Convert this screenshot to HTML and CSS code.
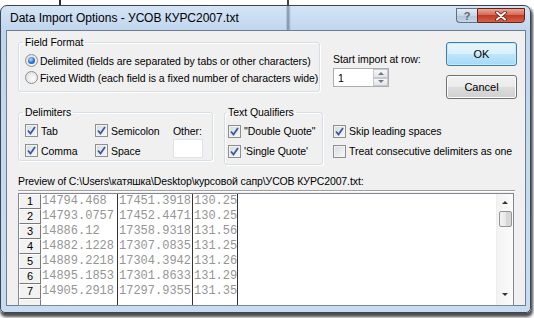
FILE: index.html
```html
<!DOCTYPE html>
<html>
<head>
  <title>Data Import Options</title>
  <link rel="stylesheet" href="styles.css">
</head>
<body>
  <div class="window">
    <div class="titlebar">
      <span class="title">Data Import Options - УСОВ КУРС2007.txt</span>
      <div class="caption-btns">
        <span class="cap help">?</span>
        <span class="cap close">
          <svg width="14" height="10" viewBox="0 0 14 10"><path d="M3 1.5 L11 8.5 M11 1.5 L3 8.5" stroke="#5a1a10" stroke-width="3.6" stroke-linecap="round"/><path d="M3 1.5 L11 8.5 M11 1.5 L3 8.5" stroke="#fff" stroke-width="2" stroke-linecap="round"/></svg>
        </span>
      </div>
    </div>

    <div class="client">
      <div class="row top-row">
        <fieldset class="group format">
          <legend>Field Format</legend>
          <div class="opt"><span class="radio on"></span>Delimited (fields are separated by tabs or other characters)</div>
          <div class="opt"><span class="radio"></span>Fixed Width (each field is a fixed number of characters wide)</div>
        </fieldset>

        <div class="start">
          <div class="start-label">Start import at row:</div>
          <div class="spin">
            <span class="spin-val">1</span>
            <span class="spin-arrows">
              <span class="arr up"></span>
              <span class="arr down"></span>
            </span>
          </div>
        </div>

        <div class="buttons">
          <button class="btn default">OK</button>
          <button class="btn">Cancel</button>
        </div>
      </div>

      <div class="row mid-row">
        <fieldset class="group delims">
          <legend>Delimiters</legend>
          <div class="delim-grid">
            <div class="opt"><span class="cb on"><svg width="11" height="11" viewBox="0 0 11 11"><path d="M2 5.5 L4.5 8.5 L9 2" fill="none" stroke="#3b5a9e" stroke-width="1.8"/></svg></span>Tab</div>
            <div class="opt"><span class="cb on"><svg width="11" height="11" viewBox="0 0 11 11"><path d="M2 5.5 L4.5 8.5 L9 2" fill="none" stroke="#3b5a9e" stroke-width="1.8"/></svg></span>Semicolon</div>
            <div class="other-label">Other:</div>
            <div class="opt"><span class="cb on"><svg width="11" height="11" viewBox="0 0 11 11"><path d="M2 5.5 L4.5 8.5 L9 2" fill="none" stroke="#3b5a9e" stroke-width="1.8"/></svg></span>Comma</div>
            <div class="opt"><span class="cb on"><svg width="11" height="11" viewBox="0 0 11 11"><path d="M2 5.5 L4.5 8.5 L9 2" fill="none" stroke="#3b5a9e" stroke-width="1.8"/></svg></span>Space</div>
            <div class="other-box"></div>
          </div>
        </fieldset>

        <fieldset class="group quals">
          <legend>Text Qualifiers</legend>
          <div class="opt"><span class="cb on"><svg width="11" height="11" viewBox="0 0 11 11"><path d="M2 5.5 L4.5 8.5 L9 2" fill="none" stroke="#3b5a9e" stroke-width="1.8"/></svg></span>"Double Quote"</div>
          <div class="opt"><span class="cb on"><svg width="11" height="11" viewBox="0 0 11 11"><path d="M2 5.5 L4.5 8.5 L9 2" fill="none" stroke="#3b5a9e" stroke-width="1.8"/></svg></span>'Single Quote'</div>
        </fieldset>

        <div class="checks">
          <div class="opt"><span class="cb on"><svg width="11" height="11" viewBox="0 0 11 11"><path d="M2 5.5 L4.5 8.5 L9 2" fill="none" stroke="#3b5a9e" stroke-width="1.8"/></svg></span>Skip leading spaces</div>
          <div class="opt"><span class="cb"></span>Treat consecutive delimiters as one</div>
        </div>
      </div>

      <div class="preview-label">Preview of C:\Users\катяшка\Desktop\курсовой сапр\УСОВ КУРС2007.txt:</div>

      <div class="preview">
        <div class="grid">
          <div class="prow"><span class="rh">1</span><span class="c c1">14794.468</span><span class="c c2">17451.3918</span><span class="c c3">130.25</span></div>
          <div class="prow"><span class="rh">2</span><span class="c c1">14793.0757</span><span class="c c2">17452.4471</span><span class="c c3">130.25</span></div>
          <div class="prow"><span class="rh">3</span><span class="c c1">14886.12</span><span class="c c2">17358.9318</span><span class="c c3">131.56</span></div>
          <div class="prow"><span class="rh">4</span><span class="c c1">14882.1228</span><span class="c c2">17307.0835</span><span class="c c3">131.25</span></div>
          <div class="prow"><span class="rh">5</span><span class="c c1">14889.2218</span><span class="c c2">17304.3942</span><span class="c c3">131.26</span></div>
          <div class="prow"><span class="rh">6</span><span class="c c1">14895.1853</span><span class="c c2">17301.8633</span><span class="c c3">131.29</span></div>
          <div class="prow"><span class="rh">7</span><span class="c c1">14905.2918</span><span class="c c2">17297.9355</span><span class="c c3">131.35</span></div>
          <div class="prow"><span class="rh"></span><span class="c c1"></span><span class="c c2"></span><span class="c c3"></span></div>
        </div>
        <div class="scrollbar">
          <span class="sarrow sup"></span>
          <span class="thumb"></span>
          <span class="sarrow sdown"></span>
        </div>
      </div>
    </div>
  </div>
</body>
</html>
```

FILE: styles.css
```css
body {
  margin: 0;
  width: 534px;
  height: 318px;
  overflow: hidden;
  font-family: "Liberation Sans", Arial, sans-serif;
  font-size: 10.5px;
  letter-spacing: -0.05px;
  color: #000;
  background-color: #fff;
  background-image: linear-gradient(to right, #fff 59px, #2a2a2a 59px, #2a2a2a 61px, #fff 61px, #fff 287px, #444 287px, #444 289px, #fff 289px);
  background-size: 100% 6px;
  background-repeat: no-repeat;
}
.window {
  margin-top: 5px;
  width: 531px;
  height: 308px;
  box-sizing: border-box;
  border: 1px solid #3d4654;
  border-radius: 7px 7px 5px 5px;
  background: linear-gradient(to bottom, #d4e4f5, #bfd5ee 26px, #c4d9f0 120px, #c8dcf1);
  box-shadow: 1px 3px 3px 1px rgba(0, 0, 0, 0.7);
  display: flex;
  flex-direction: column;
}
.titlebar {
  height: 24px;
  display: flex;
  align-items: flex-start;
  padding: 0 5px 0 9px;
  border-radius: 6px 6px 0 0;
  background: linear-gradient(to right, transparent 285px, rgba(70, 85, 105, 0.35) 286px, rgba(50, 60, 80, 0.5) 287px, rgba(70, 85, 105, 0.35) 288px, transparent 290px);
}
.title {
  font-size: 12px;
  line-height: 14px;
  letter-spacing: 0;
  margin-top: 5px;
  color: #000;
}
.caption-btns {
  margin-left: auto;
  margin-top: 2px;
  display: flex;
}
.cap {
  height: 15px;
  box-sizing: border-box;
  display: flex;
  align-items: center;
  justify-content: center;
}
.help {
  width: 21px;
  border: 1px solid #5f7187;
  border-right: none;
  border-radius: 0 0 0 4px;
  background: linear-gradient(to bottom, #e4ecf5, #c9d6e5 50%, #b5c5d8 51%, #c6d6e8);
  color: #5d6670;
  font-size: 11px;
  font-weight: bold;
}
.close {
  width: 48px;
  border: 1px solid #6a2018;
  border-radius: 0 0 4px 0;
  background: linear-gradient(to bottom, #e8a898, #d46a55 45%, #c43a22 50%, #d4624a);
}
.client {
  margin: 0 4px 0 5px;
  height: 276px;
  box-sizing: border-box;
  border: 1px solid #6f7d8c;
  background: #f0f0f0;
  padding: 5px 8px 0 11px;
}
.row {
  display: flex;
  align-items: flex-start;
}
.group {
  margin: 0;
  border: 1px solid #d5dfe5;
  border-radius: 3px;
  box-shadow: inset 1px 1px 0 #fff, 1px 1px 0 #fff;
  min-width: 0;
}
.group legend {
  padding: 0 2px;
  margin-left: -2px;
  line-height: 13px;
}
.opt {
  display: flex;
  align-items: center;
  height: 17px;
  white-space: nowrap;
}
.format {
  width: 302px;
  box-sizing: border-box;
  padding: 3px 0 5px 6px;
}
.radio {
  flex-shrink: 0;
  width: 13px;
  height: 13px;
  box-sizing: border-box;
  border: 1px solid #8e8f8f;
  border-radius: 50%;
  background: radial-gradient(circle at 60% 60%, #fdfdfd, #d8d8d8);
  margin-right: 2px;
  display: flex;
  align-items: center;
  justify-content: center;
}
.radio.on::after {
  content: "";
  width: 7px;
  height: 7px;
  border-radius: 50%;
  background: radial-gradient(circle at 40% 35%, #b6dcff, #2a72c8 55%, #124a96);
}
.cb {
  flex-shrink: 0;
  width: 13px;
  height: 13px;
  box-sizing: border-box;
  border: 1px solid #8e8f8f;
  background: linear-gradient(135deg, #d5d9df, #f8f9fa);
  box-shadow: inset 0 0 0 1px #f2f2f2;
  margin-right: 3px;
  display: flex;
  align-items: center;
  justify-content: center;
}
.start {
  margin-left: 13px;
  margin-top: 17px;
}
.start-label {
  line-height: 13px;
}
.spin {
  margin-top: 2px;
  width: 56px;
  height: 19px;
  box-sizing: border-box;
  border: 1px solid #abadb3;
  background: #fff;
  display: flex;
  align-items: center;
}
.spin-val {
  padding-left: 4px;
}
.spin-arrows {
  margin-left: auto;
  width: 15px;
  height: 17px;
  display: flex;
  flex-direction: column;
}
.arr {
  flex: 1;
  border: 1px solid #c5c9cf;
  background: linear-gradient(to bottom, #f7f7f7, #e4e4e4);
  display: flex;
  align-items: center;
  justify-content: center;
}
.arr::after {
  content: "";
  border-left: 3px solid transparent;
  border-right: 3px solid transparent;
}
.arr.up::after {
  border-bottom: 3px solid #6c7a8a;
}
.arr.down::after {
  border-top: 3px solid #6c7a8a;
}
.buttons {
  margin-left: auto;
  margin-top: 6px;
  display: flex;
  flex-direction: column;
  gap: 9px;
}
.btn {
  width: 71px;
  height: 24px;
  font-family: "Liberation Sans", Arial, sans-serif;
  font-size: 11px;
  color: #000;
  border: 1px solid #707070;
  border-radius: 3px;
  background: linear-gradient(to bottom, #f2f2f2, #ebebeb 48%, #dddddd 50%, #cfcfcf);
  box-shadow: inset 0 0 0 1px #fcfcfc;
  padding: 0;
}
.btn.default {
  border-color: #3c7fb1;
  background: linear-gradient(to bottom, #eaf6fd, #d9f0fc 48%, #bee6fd 50%, #a7d9f5);
  box-shadow: inset 0 0 0 1px #c8e8f9;
}
.mid-row {
  margin-top: 7px;
}
.delims {
  width: 195px;
  box-sizing: border-box;
  padding: 3px 4px 0 6px;
}
.delim-grid {
  display: grid;
  grid-template-columns: 70px 78px 32px;
  grid-auto-rows: 18px;
  row-gap: 2px;
}
.other-label {
  line-height: 18px;
}
.other-box {
  width: 30px;
  height: 19px;
  margin-top: -3px;
  box-sizing: border-box;
  border: 1px solid #e2e3ea;
  background: #fff;
}
.quals {
  margin-left: 11px;
  width: 99px;
  box-sizing: border-box;
  padding: 3px 2px 2px 3px;
}
.quals .opt, .checks .opt {
  height: 18px;
  margin-bottom: 2px;
}
.checks {
  margin-left: 10px;
  margin-top: 16px;
}
.preview-label {
  margin-top: 10px;
  margin-right: 2px;
  line-height: 13px;
  letter-spacing: -0.1px;
  padding-bottom: 2px;
  border-bottom: 1px solid #a0a0a0;
  box-shadow: 0 1px 0 #fff;
  white-space: nowrap;
}
.preview {
  margin-top: 2px;
  margin-right: 3px;
  height: 113px;
  box-sizing: border-box;
  border: 1px solid #828790;
  background: #fff;
  display: flex;
  overflow: hidden;
}
.grid {
  flex: 1;
}
.prow {
  display: flex;
  height: 15px;
}
.rh {
  width: 22px;
  box-sizing: border-box;
  border: 1px solid #7a7a7a;
  border-top-color: #fff;
  border-left-color: #fff;
  background: #f2f2f2;
  text-align: center;
  line-height: 13px;
  font-size: 11px;
}
.c {
  box-sizing: border-box;
  border-right: 1px solid #333;
  font-family: "Liberation Mono", "Courier New", monospace;
  font-size: 12px;
  letter-spacing: 0;
  line-height: 15px;
  color: #959595;
  padding-left: 1px;
  white-space: nowrap;
  overflow: hidden;
}
.c1 {
  width: 77px;
}
.c2 {
  width: 75px;
}
.c3 {
  width: 45px;
}
.scrollbar {
  width: 17px;
  box-sizing: border-box;
  border-left: 1px solid #ededed;
  background: linear-gradient(to right, #f3f3f3, #fbfbfb);
  display: flex;
  flex-direction: column;
  align-items: center;
}
.sarrow {
  height: 17px;
  display: flex;
  align-items: center;
  justify-content: center;
}
.sarrow::after {
  content: "";
  border-left: 3px solid transparent;
  border-right: 3px solid transparent;
}
.sup::after {
  border-bottom: 3px solid #333;
}
.sdown {
  margin-top: auto;
  margin-bottom: 2px;
}
.sdown::after {
  border-top: 3px solid #333;
}
.thumb {
  width: 13px;
  height: 16px;
  box-sizing: border-box;
  border: 1px solid #959595;
  border-radius: 2px;
  background: linear-gradient(to right, #f3f3f3, #e8e8e8 50%, #d6d6d6 51%, #d8d8d8);
}
```
